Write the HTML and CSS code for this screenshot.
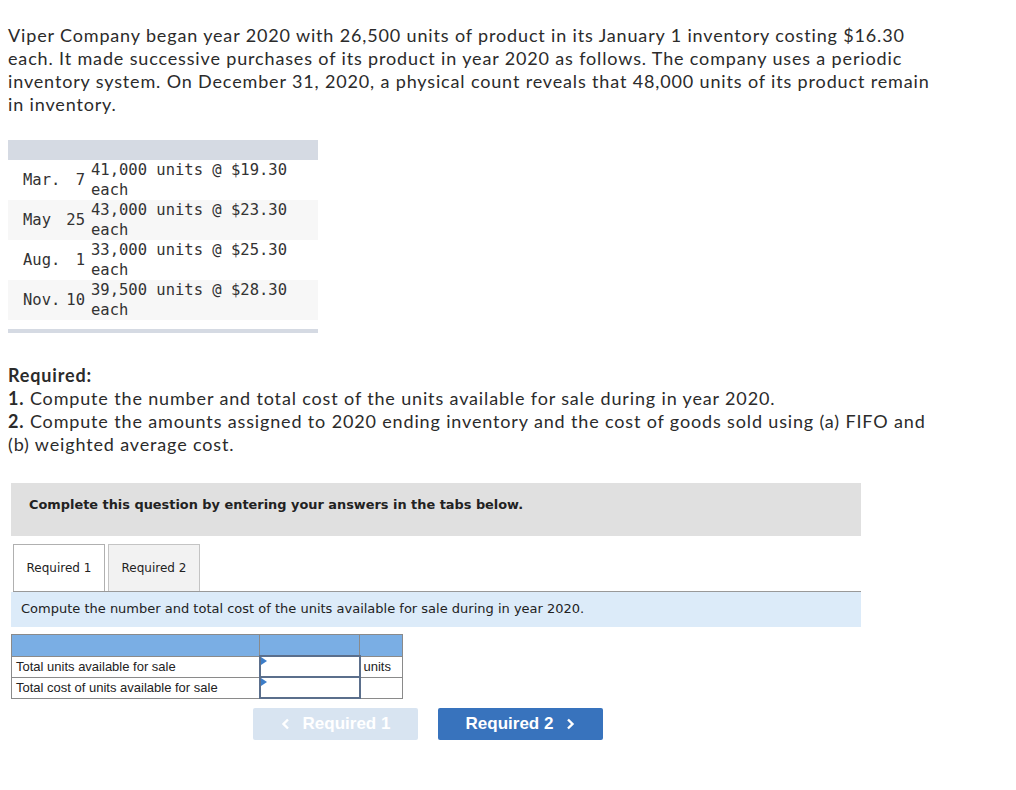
FILE: index.html
```html
<!DOCTYPE html>
<html>
<head>
<meta charset="utf-8">
<link rel="stylesheet" href="styles.css">
</head>
<body>
<div class="page">
  <p class="intro">Viper Company began year 2020 with 26,500 units of product in its January 1 inventory costing $16.30 each. It made successive purchases of its product in year 2020 as follows. The company uses a periodic inventory system. On December 31, 2020, a physical count reveals that 48,000 units of its product remain in inventory.</p>

  <div class="purchases">
    <div class="ph"></div>
    <table class="ptable">
      <colgroup><col class="c1"><col class="c2"><col class="c3"></colgroup>
      <tr><td class="month">Mar.</td><td class="day">7</td><td class="desc">41,000 units @ $19.30 each</td></tr>
      <tr class="alt"><td class="month">May</td><td class="day">25</td><td class="desc">43,000 units @ $23.30 each</td></tr>
      <tr><td class="month">Aug.</td><td class="day">1</td><td class="desc">33,000 units @ $25.30 each</td></tr>
      <tr class="alt"><td class="month">Nov.</td><td class="day">10</td><td class="desc">39,500 units @ $28.30 each</td></tr>
    </table>
    <div class="pf"></div>
  </div>

  <div class="required">
    <p class="rtitle">Required:</p>
    <p><b>1.</b> Compute the number and total cost of the units available for sale during in year 2020.</p>
    <p><b>2.</b> Compute the amounts assigned to 2020 ending inventory and the cost of goods sold using (a) FIFO and (b) weighted average cost.</p>
  </div>

  <div class="work">
    <div class="notice">Complete this question by entering your answers in the tabs below.</div>

    <div class="tabs">
      <div class="tab active">Required 1</div>
      <div class="tab">Required 2</div>
    </div>

    <div class="instr">Compute the number and total cost of the units available for sale during in year 2020.</div>

    <table class="answer">
      <colgroup><col class="a1"><col class="a2"><col class="a3"></colgroup>
      <tr class="head"><td></td><td></td><td></td></tr>
      <tr><td class="label">Total units available for sale</td><td class="input"><span class="tri"></span></td><td class="unit">units</td></tr>
      <tr><td class="label">Total cost of units available for sale</td><td class="input"><span class="tri"></span></td><td class="unit"></td></tr>
    </table>

    <div class="nav">
      <div class="btn disabled">
        <svg class="chev" width="10" height="12" viewBox="0 0 10 12"><polyline points="7,1.5 2.5,6 7,10.5" fill="none" stroke="#fff" stroke-width="2.4"/></svg>
        <span>Required 1</span>
      </div>
      <div class="btn primary">
        <span>Required 2</span>
        <svg class="chev" width="10" height="12" viewBox="0 0 10 12"><polyline points="3,1.5 7.5,6 3,10.5" fill="none" stroke="#fff" stroke-width="2.4"/></svg>
      </div>
    </div>
  </div>
</div>
</body>
</html>
```

FILE: styles.css
```css
html, body {
  margin: 0;
  padding: 0;
  background: #fff;
}
body {
  padding: 8px;
}
.page {
  color: #2b2b2b;
}
.intro {
  font-family: Lato, "Open Sans", sans-serif;
  font-size: 18px;
  letter-spacing: 0.85px;
  line-height: 23px;
  margin: 16px 0 0 0;
  width: 936px;
}
.purchases {
  margin-top: 24px;
  width: 310px;
}
.ph {
  height: 20px;
  background: #d5dae3;
}
.ptable {
  border-collapse: collapse;
  table-layout: fixed;
  width: 310px;
  font-family: "DejaVu Sans Mono", monospace;
  font-size: 15.5px;
  line-height: 20px;
  color: #333;
}
.c1 { width: 54px; }
.c2 { width: 26px; }
.c3 { width: 230px; }
.ptable td {
  padding: 0;
  vertical-align: middle;
}
.ptable tr.alt td {
  background: #f7f7f7;
}
.month {
  padding-left: 15px !important;
}
.day {
  text-align: right;
  padding-right: 3px !important;
}
.desc {
  padding-left: 3px !important;
}
.pf {
  margin-top: 9px;
  height: 4px;
  background: #d5dae3;
}
.required {
  margin-top: 31px;
  width: 936px;
}
.required p {
  font-family: Lato, "Open Sans", sans-serif;
  font-size: 18px;
  letter-spacing: 0.85px;
  line-height: 23px;
  margin: 0;
}
.required .rtitle {
  font-weight: bold;
}
.work {
  margin-left: 3px;
  width: 850px;
  margin-top: 27px;
}
.notice {
  background: #e0e0e0;
  font-family: "DejaVu Sans", Verdana, sans-serif;
  font-weight: bold;
  font-size: 12.9px;
  line-height: 16px;
  padding: 14px 18px 23px 18px;
  color: #222;
}
.tabs {
  margin-top: 8px;
  margin-left: 2px;
  display: flex;
  gap: 3px;
  border-bottom: 1px solid #999;
  height: 47px;
}
.tab {
  height: 47px;
  border: 1px solid #c4c4c4;
  border-bottom: none;
  box-sizing: border-box;
  width: 92px;
  background: #f2f2f2;
  font-family: "DejaVu Sans", Verdana, sans-serif;
  font-size: 12px;
  display: flex;
  align-items: center;
  justify-content: center;
  color: #222;
}
.tab.active {
  background: #fff;
  border-color: #b0b0b0;
}
.instr {
  background: #dcebf9;
  font-family: "DejaVu Sans", Verdana, sans-serif;
  font-size: 13px;
  line-height: 16px;
  padding: 9px 10px 10px 10px;
  color: #222;
}
.answer {
  margin-top: 7px;
  border-collapse: collapse;
  table-layout: fixed;
  width: 391px;
  font-family: "Liberation Sans", Arial, sans-serif;
  font-size: 13px;
  color: #222;
}
.a1 { width: 248px; }
.a2 { width: 100px; }
.a3 { width: 43px; }
.answer td {
  border: 1px solid #8a8a8a;
  height: 19px;
  padding: 0 4px;
  line-height: 15px;
}
.answer tr.head td {
  background: #7aaee4;
  height: 20px;
}
.answer td.input {
  border: 2px solid #5b6f8c;
  position: relative;
  padding: 0;
}
.tri {
  position: absolute;
  left: 0;
  top: 0;
  width: 0;
  height: 0;
  border-top: 4px solid transparent;
  border-bottom: 4px solid transparent;
  border-left: 6px solid #3c7dc8;
}
.unit {
  padding-left: 3px !important;
}
.nav {
  display: flex;
  gap: 20px;
  margin-top: 9px;
  padding-left: 242px;
}
.btn {
  width: 165px;
  height: 32px;
  border-radius: 2px;
  display: flex;
  align-items: center;
  justify-content: center;
  gap: 12px;
  font-family: "Liberation Sans", Arial, sans-serif;
  font-weight: bold;
  font-size: 17px;
  color: #fff;
}
.btn.disabled {
  background: #d8e4f1;
}
.btn.primary {
  background: #3873bd;
}
.chev {
  display: block;
}
```
